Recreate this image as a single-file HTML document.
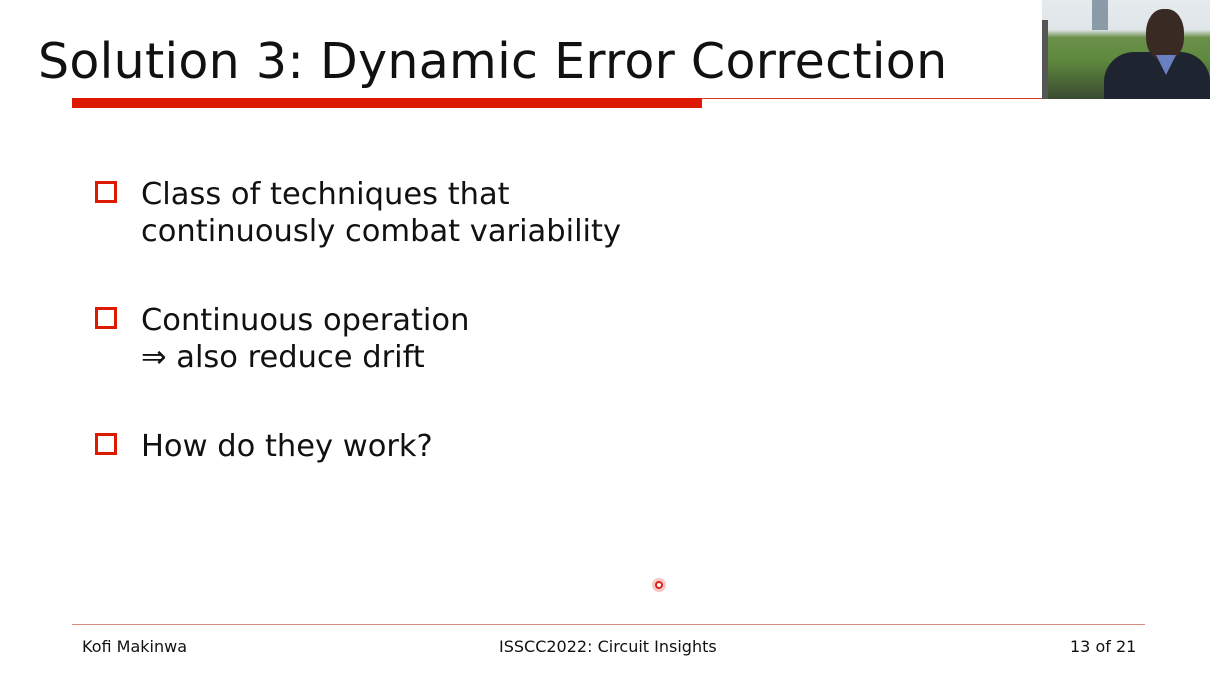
<!DOCTYPE html>
<html><head><style>
body{margin:0;width:1210px;height:681px;background:#fff;position:relative;overflow:hidden;font-family:"DejaVu Sans","Liberation Sans",sans-serif;color:#111}
.t{position:absolute;left:38px;top:33px;font-size:49px;white-space:nowrap;letter-spacing:0.3px}
.bar{position:absolute;left:72px;top:98px;width:630px;height:10px;background:#dd1a00}
.line{position:absolute;left:702px;top:98px;width:340px;height:1px;background:#d43a2a}
.cam{position:absolute;left:1042px;top:0;width:168px;height:99px;background:linear-gradient(#e6ebee 0,#dfe5e8 30%,#6a8f4a 38%,#5f8a3e 60%,#3a4a30 100%);overflow:hidden}
.b{position:absolute;left:141px;font-size:30.5px;line-height:37px;white-space:nowrap}
.sq{position:absolute;left:95px;width:22px;height:22px;border:3px solid #dd1a00;box-sizing:border-box}
.f{position:absolute;top:637px;font-size:16px}
.fl{position:absolute;left:72px;top:624px;width:1073px;height:1px;background:#d88a80}
</style></head><body>
<div class="t">Solution 3: Dynamic Error Correction</div>
<div class="bar"></div><div class="line"></div>
<div class="cam">
<div style="position:absolute;left:50px;top:0;width:16px;height:30px;background:#8a9aa6"></div>
<div style="position:absolute;left:0;top:20px;width:6px;height:79px;background:#555"></div>
<div style="position:absolute;left:62px;top:52px;width:106px;height:47px;background:#1e2530;border-radius:30px 30px 0 0"></div>
<div style="position:absolute;left:104px;top:9px;width:38px;height:52px;background:#3a2a24;border-radius:45%"></div>
<div style="position:absolute;left:114px;top:55px;width:20px;height:20px;background:#6a80c0;clip-path:polygon(0 0,100% 0,50% 100%)"></div>
</div>
<div class="sq" style="top:181px"></div>
<div class="b" style="top:176px">Class of techniques that<br>continuously combat variability</div>
<div class="sq" style="top:307px"></div>
<div class="b" style="top:302px">Continuous operation<br>⇒ also reduce drift</div>
<div class="sq" style="top:433px"></div>
<div class="b" style="top:428px">How do they work?</div>
<div style="position:absolute;left:652px;top:578px;width:14px;height:14px;border-radius:50%;background:#f7c8c4"></div>
<div style="position:absolute;left:655px;top:581px;width:8px;height:8px;border-radius:50%;background:#e0201a;box-sizing:border-box;border:2px solid #e0201a"></div>
<div style="position:absolute;left:657px;top:583px;width:4px;height:4px;border-radius:50%;background:#fff"></div>
<div class="fl"></div>
<div class="f" style="left:82px">Kofi Makinwa</div>
<div class="f" style="left:499px">ISSCC2022: Circuit Insights</div>
<div class="f" style="left:1070px">13 of 21</div>
</body></html>
